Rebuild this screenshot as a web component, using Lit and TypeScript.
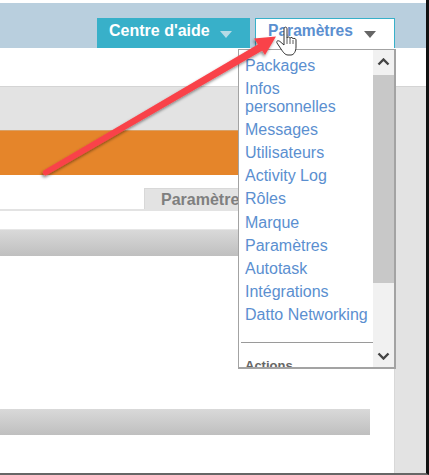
import { LitElement, html, css, svg } from "lit";
import { customElement } from "lit/decorators.js";

const ITEMS = ["Packages", "Infos personnelles", "Messages", "Utilisateurs", "Activity Log", "Rôles", "Marque", "Paramètres", "Autotask", "Intégrations", "Datto Networking"];

@customElement("app-root")
export class AppRoot extends LitElement {
  static styles = css`
    :host { display: block; width: 429px; height: 475px; position: relative; overflow: hidden; background: #fff; font-family: "Liberation Sans", Arial, sans-serif; }
    * { box-sizing: border-box; }
    .page { width: 429px; height: 475px; display: flex; flex-direction: column; border-right: 3px solid #111; border-bottom: 2px solid #666; padding-top: 3px; }
    .header { height: 45px; flex: none; background: #b9cfde; display: flex; justify-content: flex-end; align-items: flex-end; gap: 5px; padding-right: 31px; }
    .btn { height: 30px; display: flex; font-size: 16px; font-weight: 700; }
    .help { width: 153px; background: #38b0c9; color: #fff; padding: 4px 0 0 12px; gap: 10px; }
    .settings { width: 140px; background: #fff; color: #5b8fd0; border: 1px solid #38b0c9; border-bottom: 0; padding: 3px 0 0 12px; gap: 11px; font-size: 15.6px; }
    .caret { margin-top: 9px; flex: none; }
    .white { height: 39px; flex: none; border-bottom: 1px solid #d4d4d4; }
    .body { flex: 1; display: flex; flex-direction: column; background: #e3e3e3; }
    .grayband { height: 43px; flex: none; }
    .split { flex: 1; display: flex; }
    .main { width: 395px; flex: none; background: #fff; display: flex; flex-direction: column; border-right: 1px solid #d8d8d8; }
    .side { flex: 1; }
    .orange { height: 45px; flex: none; background: #e5852a; border-top: 1px solid #d9a066; }
    .tabs { height: 36px; flex: none; padding: 13px 0 0 144px; border-bottom: 2px solid #e3e3e3; }
    .tab { height: 21px; background: #e3e3e3; border: 1px solid #d8d8d8; border-bottom: 0; color: #7f7f7f; font-size: 16px; font-weight: 700; padding: 2px 0 0 16px; white-space: nowrap; }
    .bar { height: 27px; flex: none; background: linear-gradient(#d9d9d9, #bfbfbf); }
    .b1 { margin-top: 18px; border-top: 1px solid #e6e6e6; }
    .b2 { margin-top: 153px; width: 370px; height: 26px; }
    .menu { position: absolute; left: 238px; top: 49px; width: 158px; height: 320px; background: #fff; border: 1px solid #a3a3a3; border-width: 1px 2px 2px 1px; display: flex; overflow: hidden; }
    .list { width: 134px; flex: none; padding: 5px 0 0 6px; height: 100%; overflow: hidden; }
    .item { color: #5b8fd0; font-size: 16px; line-height: 18px; padding: 2px 0 3.1px; }
    .divider { height: 1px; background: #9a9a9a; margin: 15px 0 0 -4px; }
    .actions { color: #666; font-weight: 700; font-size: 13px; margin-top: 15px; }
    .scroll { width: 21px; flex: none; background: #f1f1f1; display: flex; flex-direction: column; align-items: center; padding: 1px 0; }
    .thumb { width: 100%; height: 208px; background: #c8c8c8; margin-top: 3px; }
    .arrowbtn { height: 21px; flex: none; display: flex; align-items: center; }
    .spacer { flex: 1; }
    .overlay { position: absolute; left: 0; top: 0; pointer-events: none; }
  `;

  render() {
    return html`
      <div class="page">
        <div class="header">
          <div class="btn help"><span>Centre d'aide</span>
            <svg class="caret" width="12" height="7" viewBox="0 0 12 7"><path d="M0 0H12L6 7Z" fill="#b5dbe6"/></svg>
          </div>
          <div class="btn settings"><span>Paramètres</span>
            <svg class="caret" width="12" height="7" viewBox="0 0 12 7"><path d="M0 0H12L6 7Z" fill="#666"/></svg>
          </div>
        </div>
        <div class="white"></div>
        <div class="body">
          <div class="grayband"></div>
          <div class="split">
            <div class="main">
              <div class="orange"></div>
              <div class="tabs"><div class="tab">Paramètres</div></div>
              <div class="bar b1"></div>
              <div class="bar b2"></div>
            </div>
            <div class="side"></div>
          </div>
        </div>
      </div>
      <div class="menu">
        <div class="list">
          ${ITEMS.map((i) => html`<div class="item">${i}</div>`)}
          <div class="divider"></div>
          <div class="actions">Actions</div>
        </div>
        <div class="scroll">
          <div class="arrowbtn"><svg width="13" height="8" viewBox="0 0 13 8"><path d="M1.500 6.500L6.500 1.500L11.500 6.500" fill="none" stroke="#444" stroke-width="2.400"/></svg></div>
          <div class="thumb"></div>
          <div class="spacer"></div>
          <div class="arrowbtn"><svg width="13" height="8" viewBox="0 0 13 8"><path d="M1.500 1.500L6.500 6.500L11.500 1.500" fill="none" stroke="#444" stroke-width="2.400"/></svg></div>
        </div>
      </div>
      <svg class="overlay" width="429" height="475" viewBox="0 0 429 475">
        ${svg`
          <defs><filter id="s" x="-10%" y="-10%" width="120%" height="130%"><feDropShadow dx="-1" dy="2" stdDeviation="1.500" flood-color="#000" flood-opacity=".45"/></filter></defs>
          <g filter="url(#s)">
            <path d="M43.500 170.500L262 42L265 49L46 175.500A3 3 0 0 1 43.500 170.500Z" fill="#f9434a"/>
            <path d="M254 38.500L276 36.500L265 55Z" fill="#f9434a"/>
          </g>
          <path d="M284 29c0-2.500 3-2.500 3 0v9c0-1.500 3-1.500 3 .5c0-1.500 3-1.500 3 .5c0-1 3-1 3 1v7c0 4-2 8-5 8h-3c-3 0-5-3-7-6l-4-6c-1-2 1-3 3-1.500l4 3.500Z" fill="#fff" stroke="#333" stroke-width="1"/>
          <path d="M287 38v6M290 39v5M293 40v4" stroke="#333" stroke-width=".8" fill="none"/>
        `}
      </svg>
    `;
  }
}
